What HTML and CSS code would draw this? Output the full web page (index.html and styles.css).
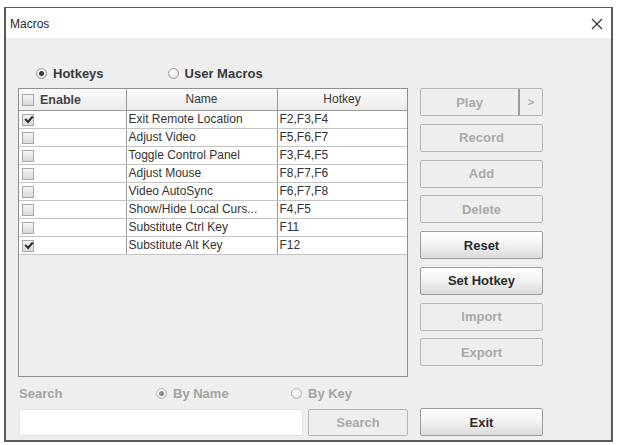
FILE: index.html
```html
<!DOCTYPE html>
<html>
<head>
<meta charset="utf-8">
<link rel="stylesheet" href="styles.css">
</head>
<body>
<div class="window">
  <div class="titlebar">
    <span class="title">Macros</span>
    <svg class="close" width="12" height="12" viewBox="0 0 12 12"><path d="M1 1 L11 11 M11 1 L1 11" stroke="#3a3a3a" stroke-width="1.3" fill="none"/></svg>
  </div>
  <div class="body">
    <div class="modes">
      <span class="opt"><span class="radio on"></span><span class="lbl">Hotkeys</span></span>
      <span class="opt user"><span class="radio"></span><span class="lbl">User Macros</span></span>
    </div>
    <div class="pane">
      <table class="grid">
        <colgroup><col class="c1"><col class="c2"><col class="c3"></colgroup>
        <thead>
          <tr><th class="en"><span class="cb"></span><b>Enable</b></th><th>Name</th><th>Hotkey</th></tr>
        </thead>
        <tbody>
          <tr><td class="en"><span class="cb on"></span></td><td>Exit Remote Location</td><td>F2,F3,F4</td></tr>
          <tr><td class="en"><span class="cb"></span></td><td>Adjust Video</td><td>F5,F6,F7</td></tr>
          <tr><td class="en"><span class="cb"></span></td><td>Toggle Control Panel</td><td>F3,F4,F5</td></tr>
          <tr><td class="en"><span class="cb"></span></td><td>Adjust Mouse</td><td>F8,F7,F6</td></tr>
          <tr><td class="en"><span class="cb"></span></td><td>Video AutoSync</td><td>F6,F7,F8</td></tr>
          <tr><td class="en"><span class="cb"></span></td><td>Show/Hide Local Curs...</td><td>F4,F5</td></tr>
          <tr><td class="en"><span class="cb"></span></td><td>Substitute Ctrl Key</td><td>F11</td></tr>
          <tr><td class="en"><span class="cb on"></span></td><td>Substitute Alt Key</td><td>F12</td></tr>
        </tbody>
      </table>
    </div>
    <div class="actions">
      <div class="btn split dis"><span class="main">Play</span><span class="more">&gt;</span></div>
      <div class="btn dis">Record</div>
      <div class="btn dis">Add</div>
      <div class="btn dis">Delete</div>
      <div class="btn">Reset</div>
      <div class="btn">Set Hotkey</div>
      <div class="btn dis">Import</div>
      <div class="btn dis">Export</div>
    </div>
    <div class="search">
      <div class="srow">
        <span class="slabel">Search</span>
        <span class="opt byname"><span class="radio on dim"></span><span class="lbl">By Name</span></span>
        <span class="opt"><span class="radio dim"></span><span class="lbl">By Key</span></span>
      </div>
      <div class="irow">
        <div class="input"></div>
        <div class="btn dis sbtn">Search</div>
      </div>
    </div>
    <div class="btn exit">Exit</div>
  </div>
</div>
</body>
</html>
```

FILE: styles.css
```css
* { box-sizing: border-box; }
html, body { margin: 0; padding: 0; background: #ffffff; }
body { font-family: "Liberation Sans", Arial, sans-serif; font-size: 12px; color: #333; }

.window {
  margin: 7px 0 0 4px;
  width: 609px;
  height: 435px;
  border: 2px solid #5a5a5a;
  border-top-width: 1px;
  background: #eeeeee;
  display: flex;
  flex-direction: column;
}

.titlebar {
  height: 30px;
  flex: none;
  background: #ffffff;
  display: flex;
  align-items: center;
  justify-content: space-between;
  padding: 1px 8px 0 4px;
}
.title { font-size: 12px; color: #2a2a2a; }
.close { display: block; }

.body {
  flex: 1;
  display: grid;
  grid-template-columns: 390px 123px;
  grid-template-rows: 50px 289px 1fr;
  column-gap: 12px;
  padding: 0 0 4px 12px;
}

.modes {
  grid-column: 1;
  grid-row: 1;
  display: flex;
  align-items: center;
  padding-top: 26px;
  padding-bottom: 6px;
  padding-left: 18px;
}
.opt { display: inline-flex; align-items: center; gap: 6px; white-space: nowrap; }
.opt.user { margin-left: 64px; }
.lbl { font-size: 13px; font-weight: bold; color: #3a3a3a; }

.radio {
  flex: none;
  width: 11px;
  height: 11px;
  border-radius: 50%;
  border: 1px solid #9a9a9a;
  background: radial-gradient(circle at 40% 35%, #ffffff 0%, #f2f2f2 45%, #d4d4d4 100%);
  position: relative;
  display: inline-block;
}
.radio.on::after {
  content: "";
  position: absolute;
  left: 2px; top: 2px;
  width: 5px; height: 5px;
  border-radius: 50%;
  background: #3c3c3c;
}
.radio.dim { border-color: #b4b4b4; }
.radio.dim.on::after { background: #8a8a8a; }

.pane {
  grid-column: 1;
  grid-row: 2;
  border: 1px solid #8f8f8f;
  background: #eeeeee;
  overflow: hidden;
}
.grid {
  border-collapse: collapse;
  table-layout: fixed;
  width: 388px;
}
.c1 { width: 107px; }
.c2 { width: 151px; }
.c3 { width: 130px; }

.grid th {
  height: 21px;
  padding: 0;
  font-weight: normal;
  font-size: 12px;
  color: #3a3a3a;
  background: linear-gradient(#fafafa, #ececec);
  border-right: 1px solid #9a9a9a;
  border-bottom: 1px solid #9a9a9a;
  text-align: center;
}
.grid th.en { text-align: left; padding-left: 3px; }
.grid th.en b { font-size: 12.5px; color: #444; margin-left: 6px; vertical-align: middle; }
.grid td {
  height: 18px;
  padding: 0 2px;
  background: #ffffff;
  border-right: 1px solid #9a9a9a;
  border-bottom: 1px solid #c4c4c4;
  white-space: nowrap;
  overflow: hidden;
  color: #333;
  line-height: 16px;
}
.grid td.en { padding-left: 3px; }

.cb {
  display: inline-block;
  width: 12px;
  height: 12px;
  border: 1px solid #a8a8a8;
  background: linear-gradient(#f6f6f6, #d9d9d9);
  vertical-align: middle;
  position: relative;
}
.cb.on::after {
  content: "";
  position: absolute;
  left: 2px;
  top: 1px;
  width: 6px;
  height: 3px;
  border-left: 2px solid #2e2e2e;
  border-bottom: 2px solid #2e2e2e;
  transform: rotate(-48deg);
  transform-origin: 50% 50%;
}

.actions {
  grid-column: 2;
  grid-row: 2;
  display: flex;
  flex-direction: column;
  gap: 7.75px;
}
.btn {
  height: 28px;
  flex: none;
  display: flex;
  align-items: center;
  justify-content: center;
  font-size: 13px;
  font-weight: bold;
  color: #2a2a2a;
  border: 1px solid #9c9c9c;
  border-radius: 2px;
  background: linear-gradient(#ffffff 0%, #f4f4f4 45%, #dadada 100%);
}
.btn.dis {
  color: #a9a9a9;
  border-color: #b6b6b6;
  background: #eeeeee;
  font-weight: bold;
}
.btn.split { justify-content: flex-start; padding: 0; }
.split .main { width: 99px; border-right: 2px solid #9a9a9a; height: 100%; display: flex; align-items: center; justify-content: center; }
.split .more { flex: 1; text-align: center; font-size: 11px; }

.search {
  grid-column: 1;
  grid-row: 3;
  display: flex;
  flex-direction: column;
  padding-top: 8px;
}
.srow {
  height: 16px;
  display: flex;
  align-items: center;
}
.slabel {
  width: 138px;
  padding-left: 1px;
  font-size: 13px;
  font-weight: bold;
  color: #a3a3a3;
}
.srow .lbl { color: #a3a3a3; }
.opt.byname { width: 135px; }
.irow {
  margin-top: 8px;
  display: flex;
  gap: 5px;
  padding-left: 1px;
}
.input {
  width: 284px;
  height: 27px;
  background: #ffffff;
  border: 1px solid #e2e2e2;
}
.sbtn { width: 100px; height: 27px; }

.exit { grid-column: 2; grid-row: 3; align-self: end; height: 28px; }
```
